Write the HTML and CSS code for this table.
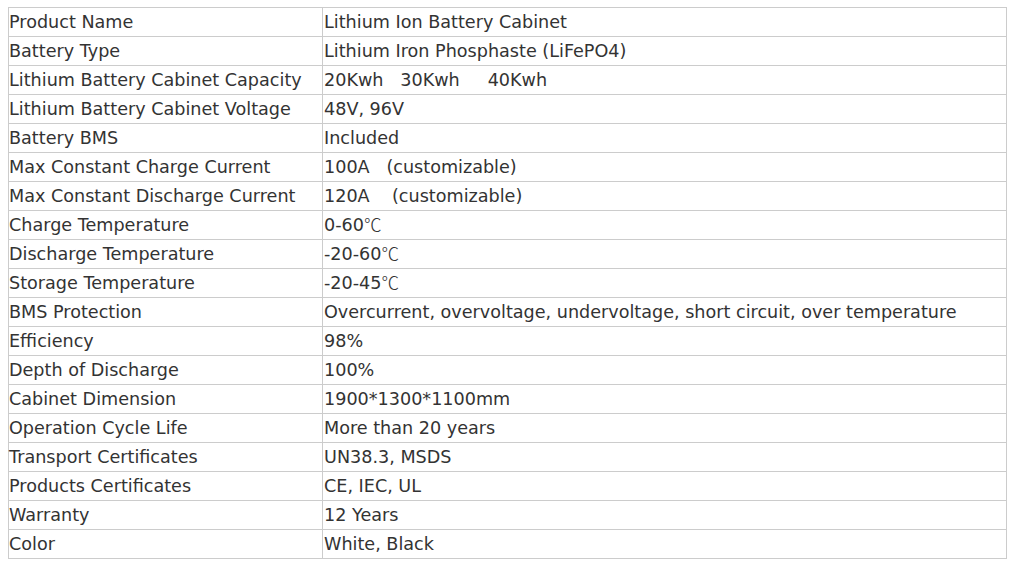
FILE: index.html
```html
<!DOCTYPE html>
<html>
<head>
<meta charset="utf-8">
<link rel="stylesheet" href="styles.css">
</head>
<body>
<table class="spec">
<tbody>
<tr><td class="k">Product Name</td><td class="v">Lithium Ion Battery Cabinet</td></tr>
<tr><td class="k">Battery Type</td><td class="v">Lithium Iron Phosphaste (LiFePO4)</td></tr>
<tr><td class="k">Lithium Battery Cabinet Capacity</td><td class="v">20Kwh&nbsp;&nbsp; 30Kwh&nbsp;&nbsp;&nbsp;&nbsp; 40Kwh</td></tr>
<tr><td class="k">Lithium Battery Cabinet Voltage</td><td class="v">48V, 96V</td></tr>
<tr><td class="k">Battery BMS</td><td class="v">Included</td></tr>
<tr><td class="k">Max Constant Charge Current</td><td class="v">100A&nbsp;&nbsp; (customizable)</td></tr>
<tr><td class="k">Max Constant Discharge Current</td><td class="v">120A&nbsp;&nbsp;&nbsp; (customizable)</td></tr>
<tr><td class="k">Charge Temperature</td><td class="v">0-60<span class="deg">℃</span></td></tr>
<tr><td class="k">Discharge Temperature</td><td class="v">-20-60<span class="deg">℃</span></td></tr>
<tr><td class="k">Storage Temperature</td><td class="v">-20-45<span class="deg">℃</span></td></tr>
<tr><td class="k">BMS Protection</td><td class="v">Overcurrent, overvoltage, undervoltage, short circuit, over temperature</td></tr>
<tr><td class="k">Efficiency</td><td class="v">98%</td></tr>
<tr><td class="k">Depth of Discharge</td><td class="v">100%</td></tr>
<tr><td class="k">Cabinet Dimension</td><td class="v">1900*1300*1100mm</td></tr>
<tr><td class="k">Operation Cycle Life</td><td class="v">More than 20 years</td></tr>
<tr><td class="k">Transport Certificates</td><td class="v">UN38.3, MSDS</td></tr>
<tr><td class="k">Products Certificates</td><td class="v">CE, IEC, UL</td></tr>
<tr><td class="k">Warranty</td><td class="v">12 Years</td></tr>
<tr><td class="k">Color</td><td class="v">White, Black</td></tr>
</tbody>
</table>
</body>
</html>
```
FILE: styles.css
```css
html, body {
  background: #ffffff;
}
body {
  margin: 7px 8px 8px 8px;
  font-family: "DejaVu Sans", Verdana, sans-serif;
  font-size: 17.6px;
  color: #333333;
}
.spec {
  width: 100%;
  border-collapse: collapse;
  border: 1px solid #cccccc;
}
.spec td {
  border: 1px solid #cccccc;
  height: 28px;
  padding: 0 2px 0 0;
  line-height: 28px;
  vertical-align: middle;
  white-space: nowrap;
}
.spec td.k {
  width: 311px;
}
.spec td.v {
  padding-left: 1px;
}
.deg {
  font-family: "Noto Sans CJK SC", sans-serif;
  font-weight: 300;
  line-height: 1;
}
```
